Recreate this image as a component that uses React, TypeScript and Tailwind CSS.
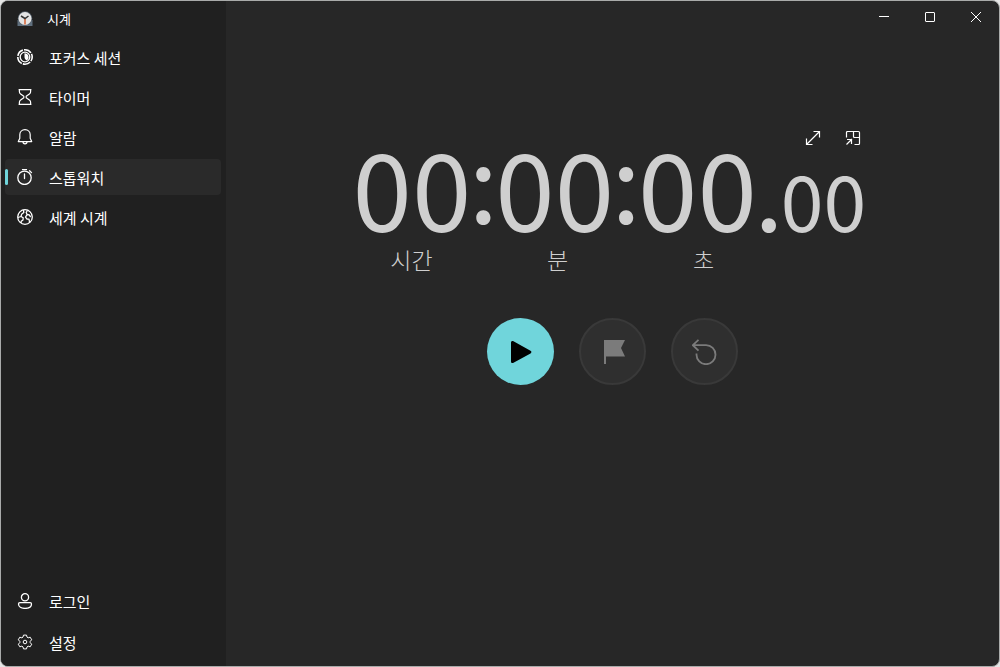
import type { ReactNode } from "react";

const TimerIcon = () => (
  <svg width="16" height="16" viewBox="0 0 16 16" fill="none" stroke="currentColor" strokeWidth="1.2" strokeLinejoin="round">
    <path d="M1.600 .6h12.800M1.600 15.400h12.800M2.400 .6v2.200c0 1 .4 1.600 1.200 2.200L6.800 7.300v1.400L3.600 11c-.8.6-1.200 1.200-1.200 2.200v2.200M13.600 .6v2.200c0 1-.4 1.600-1.200 2.200L9.200 7.300v1.400l3.200 2.300c.8.6 1.200 1.200 1.200 2.200v2.200" />
  </svg>
);

const FocusIcon = () => (
  <svg width="16" height="16" viewBox="0 0 16 16" fill="none" stroke="currentColor">
    <circle cx="8" cy="8" r="7.200" strokeWidth="1.600" strokeDasharray="7.900 1.148" strokeDashoffset="3.500" />
    <circle cx="8" cy="8" r="4.800" strokeWidth="1.300" />
    <path d="M7.500 4.200a3.900 3.900 0 0 1 2.200 7.200C8.300 10.600 7.500 9.500 7.500 8z" fill="currentColor" stroke="none" />
  </svg>
);

const BellIcon = () => (
  <svg width="16" height="16" viewBox="0 0 16 16" fill="none" stroke="currentColor" strokeWidth="1.200" strokeLinejoin="round">
    <path d="M8 .7c-3 0-5.200 2.200-5.200 5.100v3.500L1.300 12.600h13.400l-1.500-3.300V5.800C13.200 2.900 11 .7 8 .7z" />
    <path d="M6 12.800a2 2 0 0 0 4 0" />
  </svg>
);

const StopwatchIcon = () => (
  <svg width="16" height="16" viewBox="0 0 16 16" fill="none" stroke="currentColor" strokeWidth="1.300" strokeLinecap="round">
    <circle cx="7.500" cy="8.800" r="6.700" />
    <path d="M7.500 5v4.500M5.500 .6h4M12.600 1.800l1.900 1.800" />
  </svg>
);

const GlobeIcon = () => (
  <svg width="16" height="16" viewBox="0 0 16 16" fill="none" stroke="currentColor" strokeWidth="1.300" strokeLinejoin="round">
    <circle cx="8" cy="8" r="7.300" />
    <path d="M6.500 .9l.3 2.600-2.200 1.800-.6 2.200-3 1M4 7.500l2.200 1.300-.2 2.200-1.800 1.300-.2 1.700M10.500 1.200L9.200 3.500l.9 2-1.600 2.600 1.500 1.900 2 .2.600 3.300M10.100 5.500l2.200.4 1.300 2.200" />
  </svg>
);

const PersonIcon = () => (
  <svg width="16" height="16" viewBox="0 0 16 16" fill="none" stroke="currentColor" strokeWidth="1.300">
    <circle cx="8" cy="4.300" r="3.600" />
    <path d="M2.900 9.600h10.200c.8 0 1.400.6 1.400 1.400 0 2.700-2.800 4.400-6.500 4.400S1.500 13.700 1.500 11c0-.8.6-1.400 1.400-1.400z" />
  </svg>
);

const GearIcon = () => (
  <svg width="16" height="16" viewBox="0 0 16 16" fill="none" stroke="currentColor" strokeWidth="1" strokeLinejoin="round">
    <path d="M6.500 1.100h3l.5 2 1.200.7 2-.6 1.500 2.600-1.500 1.500v1.400l1.500 1.500-1.500 2.600-2-.6-1.200.7-.5 2h-3l-.5-2-1.200-.7-2 .6-1.500-2.600 1.500-1.500V7.300L1.300 5.800l1.500-2.600 2 .6L6 3.100z" />
    <circle cx="8" cy="8" r="1.800" />
  </svg>
);

const AppLogo = () => (
  <svg width="16" height="16" viewBox="0 0 16 16">
    <path d="M.5 9h15v6H.5z" fill="#5f6f7e" />
    <circle cx="8" cy="7.500" r="7.200" fill="#56616c" />
    <circle cx="8" cy="7.500" r="6.500" fill="#e4e4e4" />
    <path d="M8 8v5.500" stroke="#d9825f" strokeWidth="2" />
    <path d="M4 5l4 2.500L11.500 5" fill="none" stroke="#333" strokeWidth="1.500" />
  </svg>
);

const navItems = [
  { label: "포커스 세션", icon: <FocusIcon /> },
  { label: "타이머", icon: <TimerIcon /> },
  { label: "알람", icon: <BellIcon /> },
  { label: "스톱워치", icon: <StopwatchIcon />, active: true },
  { label: "세계 시계", icon: <GlobeIcon /> },
];

const footerItems = [
  { label: "로그인", icon: <PersonIcon /> },
  { label: "설정", icon: <GearIcon /> },
];

const NavItem = ({ label, icon, active }: { label: string; icon: ReactNode; active?: boolean }) => (
  <button
    type="button"
    aria-current={active ? "page" : undefined}
    className={`relative flex h-9 w-full items-center gap-4 rounded pl-3 text-[15px] ${active ? "bg-[#2a2a2a]" : ""}`}
  >
    {active && <span className="absolute left-0 h-4 w-[3px] rounded-full bg-[#70d5db]" />}
    {icon}
    <span className="pt-0.5">{label}</span>
  </button>
);

const Colon = () => <span className="flex w-6 justify-center self-start leading-[56px]">:</span>;

const App = () => {
  return (
    <div className="h-screen bg-[#e6e6e6] font-['Noto_Sans_CJK_KR',sans-serif] text-white">
      <div className="flex h-full overflow-hidden rounded-lg border border-[#a9abaa] bg-[#272727]">
        <aside className="flex w-[225px] shrink-0 flex-col bg-[#202020] pr-[5px] pl-1">
          <div className="mb-0.5 flex h-9 items-center gap-[14px] pl-3 text-[13px]">
            <AppLogo />
            <span>시계</span>
          </div>
          <nav className="flex flex-1 flex-col gap-1">
            {navItems.map((item) => (
              <NavItem key={item.label} {...item} />
            ))}
          </nav>
          <div className="flex flex-col gap-[5px] pb-1.5">
            {footerItems.map((item) => (
              <NavItem key={item.label} {...item} />
            ))}
          </div>
        </aside>

        <main className="flex flex-1 flex-col">
          {/* Window controls */}
          <div className="flex h-8 justify-end">
            <button type="button" aria-label="최소화" className="flex w-[46px] items-center justify-center">
              <svg width="10" height="10" viewBox="0 0 10 10" stroke="currentColor">
                <path d="M0 4.500h10" />
              </svg>
            </button>
            <button type="button" aria-label="최대화" className="flex w-[46px] items-center justify-center">
              <svg width="10" height="10" viewBox="0 0 10 10" fill="none" stroke="currentColor">
                <rect x=".5" y=".5" width="9" height="9" rx=".5" />
              </svg>
            </button>
            <button type="button" aria-label="닫기" className="flex w-[46px] items-center justify-center">
              <svg width="10" height="10" viewBox="0 0 10 10" stroke="currentColor">
                <path d="M0 0l10 10M10 0L0 10" />
              </svg>
            </button>
          </div>

          {/* Stopwatch */}
          <div className="mx-auto mt-[93px] w-[548px]">
            <div className="flex h-6 justify-end pr-[14px]">
              <button type="button" aria-label="확장" className="flex w-10 items-center justify-center">
                <svg width="16" height="16" viewBox="0 0 16 16" fill="none" stroke="currentColor" strokeWidth="1.200">
                  <path d="M1.500 14.500l13-13M8.500 1.500h6v6M1.500 8.500v6h6" />
                </svg>
              </button>
              <button type="button" aria-label="맨 위에 유지" className="flex w-10 items-center justify-center">
                <svg width="16" height="16" viewBox="0 0 16 16" fill="none" stroke="currentColor" strokeWidth="1.200">
                  <path d="M1.500 7.500v-5a1 1 0 0 1 1-1h11a1 1 0 0 1 1 1v11a1 1 0 0 1-1 1h-4" />
                  <path d="M8.500 1.500v5a1 1 0 0 0 1 1h5M1.500 14.500l5.500-5.500M2 9.500h4.500V14" />
                </svg>
              </button>
            </div>
            <div className="flex items-baseline pl-[14px] text-[107px] leading-[72px] text-[#cfcfcf]">
              <span>00</span>
              <Colon />
              <span>00</span>
              <Colon />
              <span>00</span>
              <span className="flex w-6 justify-center">.</span>
              <span className="text-[77px]">00</span>
            </div>
            <div className="mt-2 grid w-[438px] grid-cols-3 text-center text-[23px] leading-8 font-light text-[#cfcfcf]">
              <span>시간</span>
              <span>분</span>
              <span>초</span>
            </div>
          </div>

          <div className="mt-[43px] flex justify-center gap-[25px]">
            <button
              type="button"
              aria-label="시작"
              className="flex size-[67px] items-center justify-center rounded-full bg-[#70d5db] text-black"
            >
              <svg width="24" height="24" viewBox="0 0 24 24" fill="currentColor">
                <path d="M2 2.500C2 1 3.300.500 4.500 1.200l17 9.500c1.200.7 1.200 2 0 2.700l-17 9.400C3.300 23.500 2 23 2 21.500z" />
              </svg>
            </button>
            <button
              type="button"
              aria-label="랩"
              disabled
              className="flex size-[67px] items-center justify-center rounded-full border-2 border-[#393939] bg-[#2f2f2f] text-[#7b7b7b]"
            >
              <svg width="24" height="24" viewBox="0 0 24 24" fill="currentColor">
                <path d="M3 0h21l-4 8 4 8.500H5V24H3z" />
              </svg>
            </button>
            <button
              type="button"
              aria-label="다시 설정"
              disabled
              className="flex size-[67px] items-center justify-center rounded-full border-2 border-[#393939] bg-[#2f2f2f] text-[#7b7b7b]"
            >
              <svg width="26" height="26" viewBox="0 0 26 26" fill="none" stroke="currentColor" strokeWidth="1.800">
                <path d="M6.500.800L.800 6.200l5.700 5.400M.800 6.200h13.200a9.500 9.500 0 1 1-9.500 9.500v-1.300" />
              </svg>
            </button>
          </div>
        </main>
      </div>
    </div>
  );
};

export default App;
